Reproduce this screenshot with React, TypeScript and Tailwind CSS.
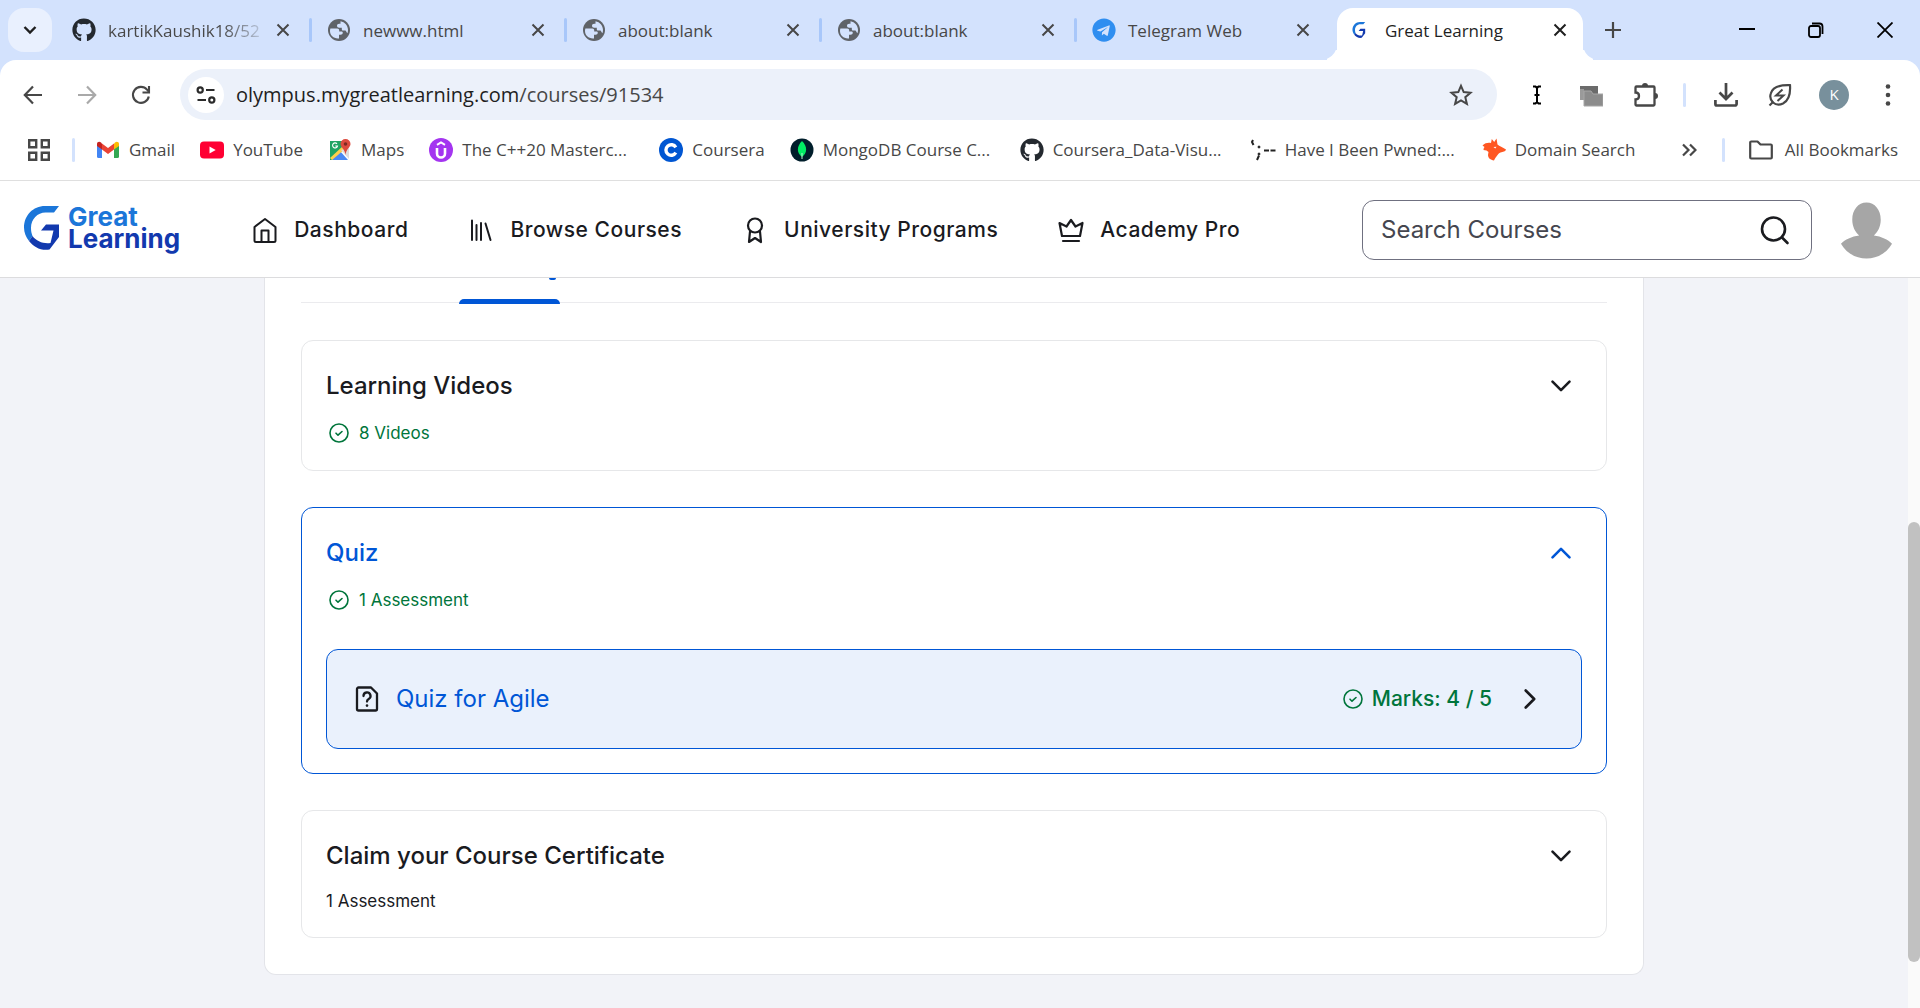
import type { ReactNode } from "react";
import { FaGithub, FaTelegram } from "react-icons/fa";

type IconProps = { className?: string };

/* ---------- browser icons ---------- */

function GlobeIcon() {
  return (
    <svg viewBox="0 0 24 24" className="size-6">
      <circle cx="12" cy="12" r="11" fill="#5f6368" />
      <path
        d="M3 13c0-1 .1-1.800.4-2.600h6.800c1.400 0 2 .8 2 2v1h2.300c.9 0 1.300.6 1.300 1.400 0 1.200-1 2-2.300 2H12v3.600c-5 .6-9-3-9-7.400z"
        fill="#d3e2fd"
      />
      <path
        d="M13.500 3.200c4.300.7 7.500 4.300 7.500 8.800 0 1.200-.2 2.300-.6 3.300-.6-.6-1.100-1.700-1.900-2.800h-2.400c-.9 0-1.300-.7-1.300-1.600V9.800h-2.500c-1.500 0-2.300-.8-2.300-2 0-1.300.9-2 2.200-2h1.300z"
        fill="#d3e2fd"
      />
    </svg>
  );
}

function GreatLearningMark({ className }: IconProps) {
  return (
    <svg viewBox="0 0 36 44" className={className}>
      <path d="M35 0H21C9 0 0 9.500 0 21.500c0 5 2 9.500 5 13.500l3.500-5c-1-2.500-1.500-5-1.500-8C7 13 13.500 6.500 21.500 6.500h8.500z" fill="#1b76d9" />
      <path d="M17 24.500l5-6h13V31l-9.500 12.500C17 45 9.500 41 5 35l3.500-5c4 5.500 11 8 18 7l3-12.500z" fill="#1239ae" />
    </svg>
  );
}

function CloseIcon({ className }: IconProps) {
  return (
    <svg viewBox="0 0 14 14" className={className} stroke="currentColor" strokeWidth="2" fill="none">
      <path d="M1.500 1.500l11 11M12.500 1.500l-11 11" />
    </svg>
  );
}

function ReloadIcon() {
  return (
    <svg viewBox="0 0 20 20" className="size-5" fill="none" stroke="#474747" strokeWidth="2.100">
      <path d="M17.800 11.500A8 8 0 1 1 16 4.600L17.800 6.600" />
      <path d="M18 1v6.500h-6.500" />
    </svg>
  );
}

function TuneIcon() {
  return (
    <svg viewBox="0 0 20 20" className="size-5" fill="none" stroke="#2b2b2b" strokeWidth="2.200">
      <circle cx="4.200" cy="5" r="2.600" />
      <path d="M10 5h8.500M1.500 15H10" />
      <circle cx="15.800" cy="15" r="2.600" />
    </svg>
  );
}

function StarIcon() {
  return (
    <svg viewBox="0 0 24 24" className="size-6" fill="none" stroke="#474747" strokeWidth="2">
      <path d="M12 2.800l2.700 6.300 6.800.6-5.200 4.500 1.600 6.700-5.900-3.600-5.900 3.600 1.600-6.700-5.200-4.500 6.800-.6z" />
    </svg>
  );
}

function CursorIcon() {
  return (
    <svg viewBox="0 0 24 24" className="size-6" fill="none" stroke="#000" strokeWidth="2">
      <path d="M8 3.500h2.500L12 5l1.500-1.500H16M8 20.500h2.500L12 19l1.500 1.500H16M12 5v14M9.500 12h5" />
    </svg>
  );
}

function WindowsIcon() {
  return (
    <svg viewBox="0 0 24 24" className="size-6">
      <path d="M1 3h18v14H1z" fill="#6b6b6b" />
      <path d="M1 6h4v11H1zM5 8h3v9H5z" fill="#9a9a9a" />
      <path d="M5 8h7l2 3h10v12H5z" fill="#8c8c8c" stroke="#a6a6a6" />
    </svg>
  );
}

function PuzzleIcon() {
  return (
    <svg viewBox="0 0 26 26" className="size-6.5" fill="none">
      <path
        d="M3.500 4.500h17a1 1 0 0 1 1 1v17a1 1 0 0 1-1 1h-17a1 1 0 0 1-1-1v-5c2 0 3.500-1.500 3.500-3.500S4.500 10.500 2.500 10.500v-5a1 1 0 0 1 1-1z"
        stroke="#474747"
        strokeWidth="2.300"
      />
      <path d="M9 4a3 3 0 0 1 6 0zM22 11a3 3 0 0 1 0 6z" fill="#474747" />
    </svg>
  );
}

function DownloadIcon() {
  return (
    <svg viewBox="0 0 24 24" className="size-6" fill="none" stroke="#474747" strokeWidth="2.700">
      <path d="M12 0v15.500M5.500 9.500L12 16l6.500-6.500" />
      <path d="M1.400 17v4a1.500 1.500 0 0 0 1.500 1.500h18.200a1.500 1.500 0 0 0 1.500-1.500v-4" />
    </svg>
  );
}

function LeafIcon() {
  return (
    <svg viewBox="0 0 24 24" className="size-6" fill="none" stroke="#474747" strokeWidth="2.200">
      <path d="M1.500 22.500l4-4" />
      <path d="M5 19.500C2.500 17 1.800 13.500 2.800 10.500 4.500 4.500 11 1.800 22 2.200c.6 8.500-1.200 15.300-7 18.300-3.500 1.700-7.300 1.300-10-1z" />
      <path d="M14.500 6.500l-6.500 6h7.500l-6 5.500" strokeWidth="2" />
    </svg>
  );
}

/* ---------- bookmark icons ---------- */

function GmailIcon() {
  return (
    <svg viewBox="0 0 24 24" className="size-6">
      <path d="M1 6v12.500A1.500 1.500 0 0 0 2.500 20H6V9.500z" fill="#4285f4" />
      <path d="M18 9.500V20h3.500a1.500 1.500 0 0 0 1.500-1.500V6z" fill="#34a853" />
      <path d="M18 5.500v6L23 8V6c0-2-2.200-3-4-1.600z" fill="#fbbc04" />
      <path d="M6 11.500v-6l6 4.500 6-4.500v6L12 16z" fill="#ea4335" />
      <path d="M1 6v2l5 3.500v-6L5 4.400C3.200 3 1 4 1 6z" fill="#c5221f" />
    </svg>
  );
}

function YouTubeIcon() {
  return (
    <svg viewBox="0 0 24 24" className="size-6">
      <rect y="3.500" width="24" height="17" rx="4" fill="#ff0033" />
      <path d="M9.500 8.500v7l6.200-3.500z" fill="#fff" />
    </svg>
  );
}

function MapsIcon() {
  return (
    <svg viewBox="0 0 24 24" className="size-6">
      <path d="M2 3h13v9L4 22H2z" fill="#1fa463" />
      <path d="M4 22l8-9 8 9z" fill="#4a89f3" />
      <path d="M2 20L15 8l2 3L4 22z" fill="#ffd04b" />
      <path d="M13 12l8-2v11z" fill="#dedede" />
      <path d="M9 5.800A2.500 2.500 0 1 0 9.500 8H7.300" fill="none" stroke="#fff" strokeWidth="1.100" />
      <path d="M17.500 1a5 5 0 0 0-5 5c0 3.500 4.500 5 5 11 .5-6 5-7.500 5-11a5 5 0 0 0-5-5z" fill="#dc4b3e" />
      <circle cx="17.500" cy="6" r="1.800" fill="#7e2a22" />
    </svg>
  );
}

function UdemyIcon() {
  return (
    <svg viewBox="0 0 24 24" className="size-6" fill="none" stroke="#fff">
      <circle cx="12" cy="12" r="12" fill="#a435f0" stroke="none" />
      <path d="M8 10v5.500a4 4 0 0 0 8 0V10" strokeWidth="2.600" />
      <path d="M8 6.800L12 4.500l4 2.300" strokeWidth="2" />
    </svg>
  );
}

function CourseraIcon() {
  return (
    <svg viewBox="0 0 24 24" className="size-6" fill="none">
      <circle cx="12" cy="12" r="12" fill="#0056d2" />
      <path d="M16.800 9.300A5.300 5.300 0 1 0 16.800 14.700" stroke="#fff" strokeWidth="3.400" />
    </svg>
  );
}

function MongoIcon() {
  return (
    <svg viewBox="0 0 24 24" className="size-6">
      <circle cx="12" cy="12" r="11.500" fill="#001e2b" />
      <path d="M12 3c5.500 5.500 5.500 11.500 0 16-5.500-4.500-5.500-10.500 0-16z" fill="#00ed64" />
      <path d="M12 15v6" stroke="#b7f5d2" />
    </svg>
  );
}

function FoxIcon() {
  return (
    <svg viewBox="0 0 24 24" className="size-6">
      <path
        d="M9 5L9.800 1l2.400 3L14.500.5l1 6C17.500 8 20.500 9.500 24 11.500c-.5 2.300-3 2.300-5.500 3-1.500.5-2.500 1.800-3.500 3.300-1 1.500-2 2.500-3 4.700-3.500-.5-6-2.500-6-5.500l.5-3-2-1.500-3-.5c0-1.200.3-2.200 1-3L.5 7.500C3 5 6 4.500 9 5z"
        fill="#ff5722"
      />
      <path d="M11.500 9l3-.3-1.200 1.800z" fill="#fff" />
    </svg>
  );
}

function QuoteIcon() {
  return (
    <svg viewBox="0 0 26 24" className="h-6 w-6.5" fill="none" stroke="#222" strokeWidth="2">
      <path d="M3 2L2 4l1.500 3M9 17.500L7 22M14 12.500h5M20.500 12.500h5" />
      <circle cx="9" cy="9" r="1" fill="#222" strokeWidth="1" />
      <circle cx="9" cy="16" r="1" fill="#222" strokeWidth="1" />
    </svg>
  );
}

/* ---------- site icons ---------- */

function HomeIcon() {
  return (
    <svg viewBox="0 0 28 28" className="size-7" fill="none" stroke="#1a1b1f" strokeWidth="2" strokeLinejoin="round">
      <path d="M14 3L3.500 11v13.500a1.500 1.500 0 0 0 1.500 1.500h18a1.500 1.500 0 0 0 1.500-1.500V11z" />
      <path d="M10.500 26V14.500h7V26" />
    </svg>
  );
}

function BooksIcon() {
  return (
    <svg viewBox="0 0 28 28" className="size-7" fill="none" stroke="#1a1b1f" strokeWidth="2" strokeLinecap="round">
      <path d="M5 4.500V24M9.500 9v15M14 7v17M18.500 7.500L23.500 24" />
    </svg>
  );
}

function RibbonIcon() {
  return (
    <svg viewBox="0 0 28 28" className="size-7" fill="none" stroke="#1a1b1f" strokeWidth="2.200" strokeLinejoin="round" strokeLinecap="round">
      <circle cx="14" cy="9.500" r="7" />
      <path d="M9 15.500L8 26l6-4 6 4-1-10.500" />
    </svg>
  );
}

function CrownIcon() {
  return (
    <svg viewBox="0 0 28 28" className="size-7" fill="none" stroke="#1a1b1f" strokeWidth="2.200" strokeLinejoin="round" strokeLinecap="round">
      <path d="M14 4l4.500 6.500L25.500 7 23 20H5L2.500 7l7 3.500z" />
      <path d="M6 25h16" />
    </svg>
  );
}

function CheckCircleIcon() {
  return (
    <svg viewBox="0 0 20 20" className="size-5" fill="none" stroke="currentColor" strokeWidth="1.600" strokeLinecap="round" strokeLinejoin="round">
      <circle cx="10" cy="10" r="9" />
      <path d="M7 10.200l2 2L13 8.500" />
    </svg>
  );
}

function QuizFileIcon() {
  return (
    <svg viewBox="0 0 24 26" className="h-6.5 w-6" fill="none" stroke="#1a1b1f" strokeWidth="2.300" strokeLinejoin="round" strokeLinecap="round">
      <path d="M3.500 1.500h12.500l6 6V23a1.500 1.500 0 0 1-1.500 1.500h-17A1.500 1.500 0 0 1 2 23V3a1.500 1.500 0 0 1 1.500-1.500z" />
      <path d="M8.500 10a3.500 3.500 0 1 1 5.200 3c-1.200.7-1.700 1.300-1.700 2.500" />
      <path d="M12 19.500v.1" strokeWidth="2.600" />
    </svg>
  );
}

function Chevron({ className }: IconProps) {
  return (
    <svg viewBox="0 0 22 22" className={className} fill="none" stroke="currentColor" strokeWidth="2.600" strokeLinecap="round" strokeLinejoin="round">
      <path d="M2.500 6.700l8.500 8.500 8.500-8.500" />
    </svg>
  );
}

/* ---------- browser chrome ---------- */

type TabInfo = { title: string; icon: ReactNode; fade?: boolean };

const tabs: TabInfo[] = [
  { title: "kartikKaushik18/52", icon: <FaGithub className="size-6 text-[#24292f]" />, fade: true },
  { title: "newww.html", icon: <GlobeIcon /> },
  { title: "about:blank", icon: <GlobeIcon /> },
  { title: "about:blank", icon: <GlobeIcon /> },
  { title: "Telegram Web", icon: <FaTelegram className="size-6 text-[#2f8ef0]" /> },
];

function TabStrip() {
  return (
    <div className="flex h-15 items-start bg-[#d3e2fd] pt-2 pl-2">
      <button type="button" aria-label="Search tabs" className="flex size-11 items-center justify-center rounded-2xl bg-[#e9f0fe] text-[#1f1f1f]">
        <svg viewBox="0 0 14 14" className="size-3.5" fill="none" stroke="currentColor" strokeWidth="2.400">
          <path d="M1.500 4l5.500 5.500L12.500 4" />
        </svg>
      </button>
      <div className="ml-[5px] flex min-w-0">
        {tabs.map((tab, i) => (
          <div key={i} className="flex h-11 w-[255px] items-center pl-[15px]">
            {tab.icon}
            <button
              type="button"
              className={
                tab.fade
                  ? "ml-3 w-[152px] overflow-hidden bg-linear-to-r from-[#474747] from-75% to-[#474747]/20 bg-clip-text pt-0.5 text-left text-[17px] whitespace-nowrap text-transparent"
                  : "ml-3 w-[152px] pt-0.5 text-left text-[17px] whitespace-nowrap text-[#474747]"
              }
            >
              {tab.title}
            </button>
            <button type="button" aria-label="Close tab" className="ml-4 text-[#474747]">
              <CloseIcon className="size-3.5" />
            </button>
            {i < tabs.length - 1 && <span className="ml-auto h-6 w-[3px] rounded-full bg-[#a8c7fa]" />}
          </div>
        ))}
        <div className="relative ml-[5px] flex h-13 w-[246px] items-center rounded-t-2xl bg-white pb-2 pl-[10px]">
          <span className="absolute bottom-0 -left-4 size-4 rounded-br-2xl shadow-[6px_6px_0_0_white]" />
          <span className="absolute -right-4 bottom-0 size-4 rounded-bl-2xl shadow-[-6px_6px_0_0_white]" />
          <GreatLearningMark className="mx-1 size-4" />
          <button type="button" className="ml-3.5 w-[152px] pt-0.5 text-left text-[17px] whitespace-nowrap text-[#1f1f1f]">
            Great Learning
          </button>
          <button type="button" aria-label="Close tab" className="ml-4 text-[#1f1f1f]">
            <CloseIcon className="size-3.5" />
          </button>
        </div>
      </div>
      <button type="button" aria-label="New tab" className="ml-[22px] flex h-11 items-center">
        <svg viewBox="0 0 16 16" className="size-4" stroke="#474747" strokeWidth="2.200">
          <path d="M8 0v16M0 8h16" />
        </svg>
      </button>
      <div className="ml-auto flex h-11 items-center gap-[53px] pr-[27px]">
        <button type="button" aria-label="Minimize">
          <svg viewBox="0 0 16 16" className="size-4" stroke="#000" strokeWidth="2">
            <path d="M0 7h16" />
          </svg>
        </button>
        <button type="button" aria-label="Restore">
          <svg viewBox="0 0 16 16" className="size-4" fill="none" stroke="#000" strokeWidth="1.800">
            <rect x="1" y="4" width="11" height="11" rx="2" />
            <path d="M4 1.500h7.500a3 3 0 0 1 3 3V12" />
          </svg>
        </button>
        <button type="button" aria-label="Close">
          <svg viewBox="0 0 16 16" className="size-4" stroke="#000" strokeWidth="1.800">
            <path d="M.5.5l15 15M15.500.5l-15 15" />
          </svg>
        </button>
      </div>
    </div>
  );
}

function Toolbar() {
  return (
    <div className="flex h-[69px] items-center rounded-t-2xl bg-white pl-[23px]">
      <div className="flex items-center gap-[34px]">
        <button type="button" aria-label="Back">
          <svg viewBox="0 0 20 20" className="size-5" fill="none" stroke="#474747" strokeWidth="2.200">
            <path d="M19 10H2M10 1.500L1.800 10l8.200 8.500" />
          </svg>
        </button>
        <button type="button" aria-label="Forward">
          <svg viewBox="0 0 20 20" className="size-5" fill="none" stroke="#a9a9a9" strokeWidth="2.200">
            <path d="M1 10h17M10 1.500l8.200 8.500-8.200 8.500" />
          </svg>
        </button>
        <button type="button" aria-label="Reload">
          <ReloadIcon />
        </button>
      </div>
      <div className="ml-[29px] flex h-[51px] flex-1 items-center rounded-full bg-[#ecf1fa] pr-6 pl-2">
        <button type="button" aria-label="Site information" className="flex size-9 items-center justify-center rounded-full bg-white">
          <TuneIcon />
        </button>
        <a href="#address" className="ml-3 flex-1 text-[20px] whitespace-nowrap text-[#474747]">
          <span className="text-[#1f1f1f]">olympus.mygreatlearning.com</span>/courses/91534
        </a>
        <button type="button" aria-label="Bookmark this page">
          <StarIcon />
        </button>
      </div>
      <div className="ml-7 flex items-center gap-[30px]">
        <button type="button" aria-label="Cursor extension"><CursorIcon /></button>
        <button type="button" aria-label="Windows extension"><WindowsIcon /></button>
        <button type="button" aria-label="Extensions"><PuzzleIcon /></button>
      </div>
      <span className="ml-6 h-6 w-[3px] rounded-full bg-[#d3e2fd]" />
      <div className="ml-7 flex items-center gap-[30px] pr-5">
        <button type="button" aria-label="Downloads"><DownloadIcon /></button>
        <button type="button" aria-label="Performance"><LeafIcon /></button>
        <button type="button" aria-label="Profile" className="-mx-[3px] flex size-[30px] items-center justify-center rounded-full bg-[#78909c] text-[15px] text-white">K</button>
        <button type="button" aria-label="Menu">
          <svg viewBox="0 0 24 24" className="size-6" fill="#474747">
            <circle cx="12" cy="3.500" r="2.300" />
            <circle cx="12" cy="12" r="2.300" />
            <circle cx="12" cy="20.500" r="2.300" />
          </svg>
        </button>
      </div>
    </div>
  );
}

type Bookmark = { label: string; icon: ReactNode; clipped?: boolean };

const bookmarks: Bookmark[] = [
  { label: "Gmail", icon: <GmailIcon /> },
  { label: "YouTube", icon: <YouTubeIcon /> },
  { label: "Maps", icon: <MapsIcon /> },
  { label: "The C++20 Masterc...", icon: <UdemyIcon />, clipped: true },
  { label: "Coursera", icon: <CourseraIcon /> },
  { label: "MongoDB Course C...", icon: <MongoIcon />, clipped: true },
  { label: "Coursera_Data-Visu...", icon: <FaGithub className="size-6 text-[#24292f]" />, clipped: true },
  { label: "Have I Been Pwned:...", icon: <QuoteIcon />, clipped: true },
  { label: "Domain Search", icon: <FoxIcon /> },
];

function BookmarksBar() {
  return (
    <div className="flex h-[52px] items-center border-b border-[#dfdfdf] bg-white pr-[22px] pb-[10px] pl-7 text-[17px] text-[#474747]">
      <button type="button" aria-label="Apps">
        <svg viewBox="0 0 22 22" className="size-[22px]" fill="none" stroke="#474747" strokeWidth="2.400">
          <path d="M1.200 1.200h7v7h-7zM13.800 1.200h7v7h-7zM1.200 13.800h7v7h-7zM13.800 13.800h7v7h-7z" />
        </svg>
      </button>
      <span className="ml-[22px] h-6 w-[3px] rounded-full bg-[#d3e2fd]" />
      <nav className="ml-[21px] flex items-center gap-[25px]">
        {bookmarks.map((b) => (
          <a key={b.label} href="#bookmark" className="flex items-center gap-[9px] whitespace-nowrap">
            {b.icon}
            <span className={b.clipped ? "w-[172px]" : ""}>{b.label}</span>
          </a>
        ))}
      </nav>
      <button type="button" aria-label="More bookmarks" className="ml-auto">
        <svg viewBox="0 0 16 16" className="size-4" fill="none" stroke="#474747" strokeWidth="2.200">
          <path d="M2 2.500L7.500 8 2 13.500M9 2.500L14.500 8 9 13.500" />
        </svg>
      </button>
      <span className="ml-[25px] h-6 w-[3px] rounded-full bg-[#d3e2fd]" />
      <a href="#all" className="ml-6 flex items-center gap-3 whitespace-nowrap">
        <svg viewBox="0 0 24 24" className="size-6" fill="none" stroke="#474747" strokeWidth="2.200" strokeLinejoin="round">
          <path d="M1.200 4.500a1 1 0 0 1 1-1h6.300l3 3h10.300a1 1 0 0 1 1 1v12a1 1 0 0 1-1 1H2.200a1 1 0 0 1-1-1z" />
        </svg>
        All Bookmarks
      </a>
    </div>
  );
}

/* ---------- site ---------- */

const navItems: { label: string; icon: ReactNode }[] = [
  { label: "Dashboard", icon: <HomeIcon /> },
  { label: "Browse Courses", icon: <BooksIcon /> },
  { label: "University Programs", icon: <RibbonIcon /> },
  { label: "Academy Pro", icon: <CrownIcon /> },
];

function SiteHeader() {
  return (
    <header className="flex h-[97px] items-center border-b border-[#dcdcde] bg-white pt-0.5 pr-[27px] pl-6">
      <a href="#home" className="flex items-center gap-2">
        <GreatLearningMark className="mb-1 h-11 w-9" />
        <span className="mb-1 text-[26px] leading-[22px] font-bold text-[#1239ae]">
          <span className="block text-[#1b76d9]">Great</span>
          <span className="block">Learning</span>
        </span>
      </a>
      <nav className="ml-[71px] flex items-center gap-[59px]">
        {navItems.map((n) => (
          <a key={n.label} href="#nav" className="flex items-center gap-[15px] text-[21px] font-medium tracking-wide whitespace-nowrap text-[#1a1b1f]">
            {n.icon}
            {n.label}
          </a>
        ))}
      </nav>
      <div className="ml-auto flex h-15 w-[450px] items-center rounded-xl border border-[#6f7080] pr-[21px] pl-[18px]">
        <input type="text" aria-label="Search Courses" placeholder="Search Courses" className="min-w-0 flex-1 text-[24px] text-[#45464f] outline-none placeholder:text-[#45464f]" />
        <button type="button" aria-label="Search">
          <svg viewBox="0 0 30 30" className="size-[30px]" fill="none" stroke="#1a1b1f" strokeWidth="2.600" strokeLinecap="round">
            <circle cx="13.500" cy="14" r="11.500" />
            <path d="M22 22.500l5.500 5.500" />
          </svg>
        </button>
      </div>
      <button type="button" aria-label="Account" className="ml-7">
        <svg viewBox="0 0 54 58" className="h-[58px] w-[53px]">
          <path d="M27 1c8.500 0 14.500 7.500 14.500 17.500 0 7-3 12.500-7 16C42 35.500 49 38.500 53 43c-5 9-14.500 15-26 15S6 52 1 43c4-4.500 11-7.500 18.500-8.500-4-3.500-7-9-7-16C12.500 8.500 18.500 1 27 1z" fill="#a6a6a6" />
        </svg>
      </button>
    </header>
  );
}

function Section({ title, sub, done, open, children }: { title: string; sub: string; done?: boolean; open?: boolean; children?: ReactNode }) {
  return (
    <section className={open ? "rounded-xl border border-[#0056d6] px-6 pb-6" : "rounded-xl border border-[#e6e7e9] px-6"}>
      <button type="button" aria-expanded={open ? true : false} className={open ? "flex w-full items-center justify-between pt-[29px] pr-[10px] text-[#0056d6]" : "flex w-full items-center justify-between pt-[29px] pr-[10px] text-[#1a1b1f]"}>
        <span className="text-[24px] leading-8 font-medium">{title}</span>
        <Chevron className={open ? "size-[22px] rotate-180" : "size-[22px]"} />
      </button>
      {done ? (
        <p className="mt-[19px] flex items-center gap-[10px] pb-[25px] pl-[3px] text-[17px] leading-6 text-[#00753b]">
          <CheckCircleIcon />
          {sub}
        </p>
      ) : (
        <p className="mt-[17px] pb-6 text-[17px] leading-6 text-[#1a1b1f]">{sub}</p>
      )}
      {children}
    </section>
  );
}

function CourseContent() {
  return (
    <div className="mx-auto w-full max-w-[1380px] rounded-b-xl border border-t-0 border-[#e3e4e9] bg-white px-9 pb-9">
      <div className="flex h-[25px] items-end border-b border-[#ebebee]">
        <div className="ml-[158px] flex h-[25px] w-[101px] translate-y-0.5 flex-col justify-between">
          <span className="ml-[90px] h-0.5 w-[7px] -translate-y-px rounded-b-full bg-[#0056d6]" />
          <span className="h-[5px] rounded-t-lg bg-[#0056d6]" />
        </div>
      </div>
      <div className="mt-[37px] flex flex-col gap-9">
        <Section title="Learning Videos" sub="8 Videos" done />
        <Section title="Quiz" sub="1 Assessment" done open>
          <a href="#quiz" className="mt-3 flex h-[100px] items-center rounded-xl border border-[#0056d6] bg-[#eaf1fc] pr-10 pl-7">
            <QuizFileIcon />
            <span className="ml-[17px] text-[24px] text-[#0056d6]">Quiz for Agile</span>
            <span className="ml-auto flex items-center gap-[9px] text-[21px] font-medium text-[#00753b]">
              <CheckCircleIcon />
              Marks: 4 / 5
            </span>
            <Chevron className="ml-[27px] size-[22px] -rotate-90 text-[#1a1b1f]" />
          </a>
        </Section>
        <Section title="Claim your Course Certificate" sub="1 Assessment" />
      </div>
    </div>
  );
}

export default function App() {
  return (
    <div className="flex min-h-screen flex-col bg-[#f2f3f8]">
      <div className="bg-[#d3e2fd] font-['Open_Sans',sans-serif]">
        <TabStrip />
        <Toolbar />
        <BookmarksBar />
      </div>
      <div className="flex flex-1 flex-col font-['Inter',sans-serif]">
        <SiteHeader />
        <div className="flex flex-1">
          <main className="min-w-0 flex-1">
            <CourseContent />
          </main>
          <div className="w-3 bg-[#fafafa] pt-[244px]">
            <div className="h-[440px] rounded-full bg-[#c1c1c1]" />
          </div>
        </div>
      </div>
    </div>
  );
}
